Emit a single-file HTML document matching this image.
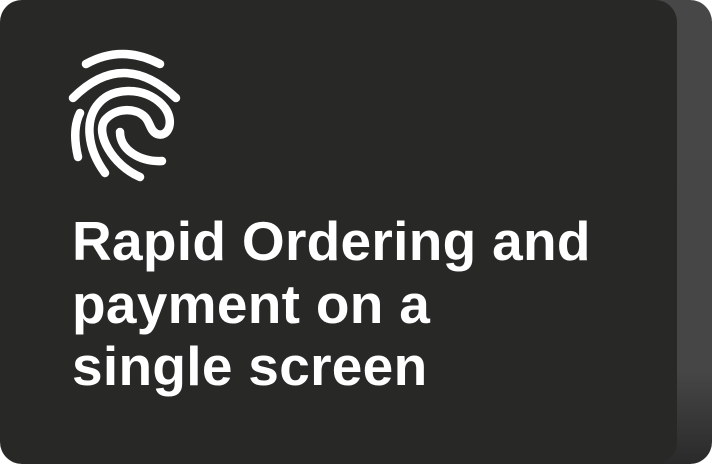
<html><head><style>
body{margin:0;width:712px;height:464px;background:#fff;position:relative;overflow:hidden}
.back{position:absolute;left:40px;top:0;width:672px;height:464px;border-radius:22px;background:linear-gradient(180deg,#474747 0%,#464646 80%,#2a2a2a 100%)}
.front{position:absolute;left:0;top:0;width:677px;height:464px;border-radius:22px;background:#282826}
.t{position:absolute;left:72px;top:210px;color:#fff;font-family:"Liberation Sans",sans-serif;font-weight:bold;font-size:55px;line-height:62.5px;letter-spacing:0.3px;white-space:nowrap}
</style></head><body>
<div class="back"></div><div class="front"></div>
<svg style="position:absolute;left:0;top:0" width="712" height="464" fill="none" stroke="#fff" stroke-width="8.5" stroke-linecap="round">
<path d="M86 64 Q122 44 160 64"/>
<path d="M73 98 Q123 48 176 98"/>
<path d="M78 157 C74 140 74 125 80 113"/>
<path d="M105 173 C88 150 82 118 102 100 C118 86 150 88 165 108 C175 122 168 138 157 134 C150 131 150 122 145 117 C135 107 115 108 105 120 C95 133 112 165 140 177"/>
<path d="M120 132 C120 150 140 162 162 161"/>
</svg>
<div class="t">Rapid Ordering and<br>payment on a<br>single screen</div>
</body></html>
